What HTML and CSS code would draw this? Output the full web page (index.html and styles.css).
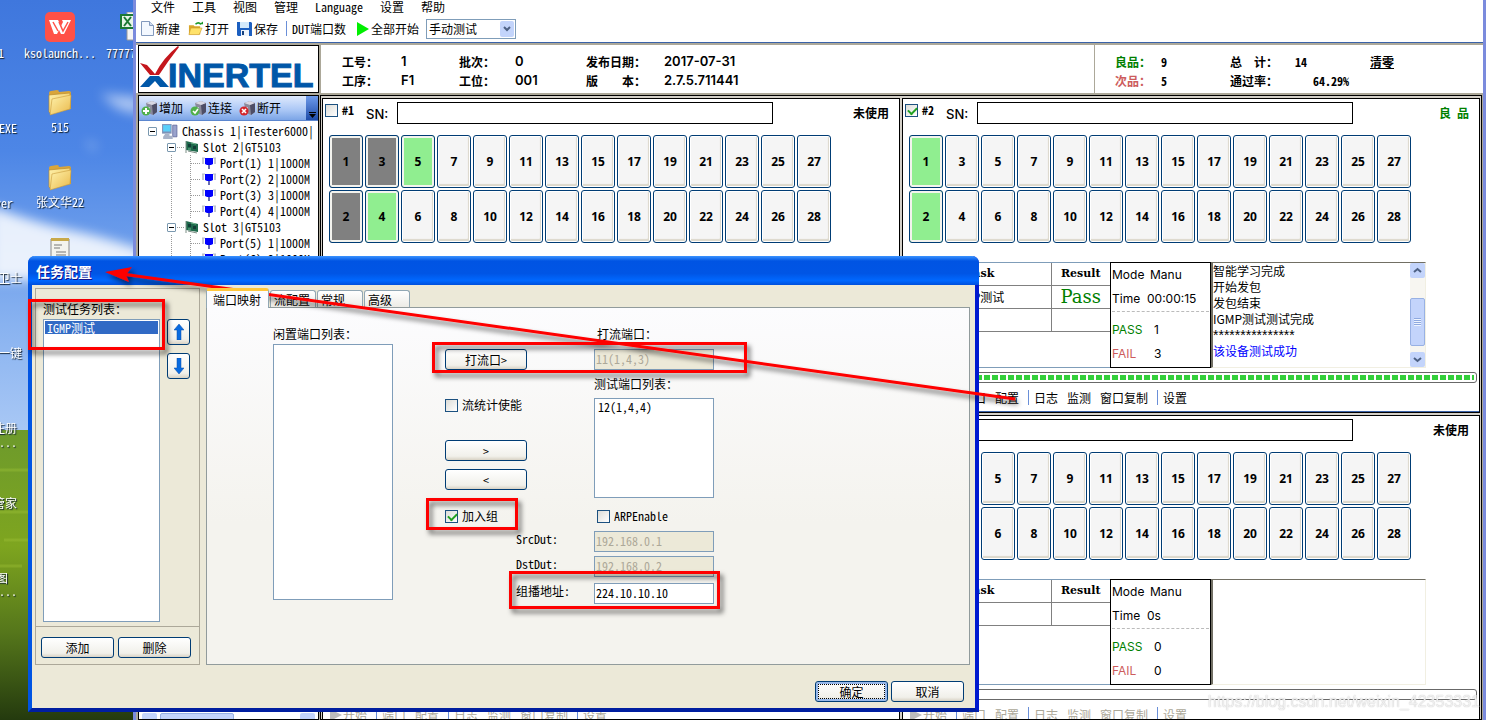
FILE: index.html
```html
<!DOCTYPE html>
<html lang="zh-CN">
<head>
<meta charset="utf-8">
<title>任务配置</title>
<link rel="stylesheet" href="styles.css">
</head>
<body>
<svg class="defs" aria-hidden="true">
  <defs>
    <linearGradient id="gold" x1="0" y1="0" x2="1" y2="1"><stop offset="0" stop-color="#fff3ad"/><stop offset="1" stop-color="#e9b84a"/></linearGradient>
    <symbol id="folder" viewBox="0 0 26 26">
      <path d="M2 3q0-2 2-2l6-1q2 0 2 2l10-1q2 0 2 2v16l-20 4z" fill="#d9a53a"/>
      <path d="M2 5l10-1 11-1v15L4 24 2 22z" fill="url(#gold)" stroke="#b98a2c" stroke-width=".7"/>
      <path d="M5 9l19-4-1 14L3 25z" fill="url(#gold)" stroke="#c99c3c" stroke-width=".6"/>
    </symbol>
    <symbol id="server" viewBox="0 0 16 16">
      <path d="M3 3l6-2 5 2v9l-4 3-5-2z" fill="#8a8a9c"/>
      <path d="M9 5l5-2v9l-4 3z" fill="#4e4e66"/>
      <path d="M3 3l6-2 5 2-5 2z" fill="#d8d8e4"/>
      <path d="M5 7h2v5H5z" fill="#c9c9d8"/>
    </symbol>
    <symbol id="pc" viewBox="0 0 16 16">
      <path d="M1 1h9v9H1z" fill="#7d92b8"/><path d="M2 2h7v6H2z" fill="#5bd0fa"/>
      <path d="M11 2h4v11h-4z" fill="#9aa3cc" stroke="#5a6298" stroke-width=".7"/>
      <path d="M4 10h4v2h3v3H2v-2z" fill="#a9b3c8"/>
    </symbol>
    <symbol id="card" viewBox="0 0 14 14">
      <path d="M1 1l12 3v8L1 10z" fill="#1f6a4c"/><path d="M3 4h3v3H3zM8 6h3v3H8z" fill="#123c36"/>
      <path d="M1 1v12M3 11l9 2" stroke="#7d8f86"/><path d="M6 3l5 1M3 9h3" stroke="#7fc79d" stroke-width=".8"/>
    </symbol>
    <symbol id="port" viewBox="0 0 14 14">
      <path d="M3 2h8v6l-2 1H5L3 8z" fill="#00f"/><path d="M1 2v6M13 2v6" stroke="#8a93a8"/>
      <path d="M0 2h3M11 2h3" stroke="#b7bcc8"/><path d="M6 9h2v4H6z" fill="#6a6fb0"/>
    </symbol>
  </defs>
</svg>

<aside class="desktop">
  <svg class="wallpaper" viewBox="0 0 133 720" preserveAspectRatio="none" aria-hidden="true">
    <defs>
      <linearGradient id="sky" x1="0" y1="0" x2="0" y2="1"><stop offset="0" stop-color="#3f77dd"/><stop offset=".35" stop-color="#4d86e6"/><stop offset=".75" stop-color="#88b2f0"/><stop offset="1" stop-color="#a9c8f5"/></linearGradient>
      <linearGradient id="grass" x1="0" y1="0" x2="0" y2="1"><stop offset="0" stop-color="#6d9a2c"/><stop offset=".4" stop-color="#7ea51f"/><stop offset=".7" stop-color="#55761b"/><stop offset="1" stop-color="#243a0e"/></linearGradient>
      <filter id="haze" x="-30%" y="-60%" width="160%" height="220%"><feGaussianBlur stdDeviation="6"/></filter>
    </defs>
    <rect width="133" height="432" fill="url(#sky)"/>
    <g fill="#fff" filter="url(#haze)">
      <path d="M100 94l40 3v18l-22-6z" opacity=".55"/>
      <path d="M-10 206q50 18 80 24t73 20v30H-10z" opacity=".85"/>
      <path d="M84 140l14 4-5 8z" opacity=".3"/>
    </g>
    <rect y="430" width="133" height="290" fill="url(#grass)"/>
    <g stroke="#a3c63a" opacity=".35"><path d="M0 470h30M0 512h28M4 540h26M0 566h22" stroke-width="3"/></g>
  </svg>
  <span class="lbl l1">1</span>
  <span class="lbl l2">EXE</span>
  <span class="lbl l3">ver</span>
  <span class="lbl l4">卫士 T</span>
  <span class="lbl l5">一键 A</span>
  <span class="lbl l6">注册<br>...</span>
  <span class="lbl l7">管家</span>
  <span class="lbl l8">图</span>
  <span class="lbl l9">n...</span>
  <figure class="shortcut s1">
    <svg width="30" height="30" viewBox="0 0 30 30"><rect width="30" height="30" rx="5" fill="#ff5147"/><path d="M4 8h9l3 6 2-4-1-2h9l-7 14h-3l-2-4-2 4h-3z" fill="#fff"/><path d="M8 10l5 9M14 10l4 9 5-9" stroke="#ff5147" stroke-width="1.5" fill="none"/></svg>
    <figcaption>ksolaunch...</figcaption>
  </figure>
  <figure class="shortcut s2"><svg width="26" height="26"><use href="#folder"/></svg><figcaption>515</figcaption></figure>
  <figure class="shortcut s3"><svg width="26" height="26"><use href="#folder"/></svg><figcaption>张文华22</figcaption></figure>
  <figure class="shortcut s4"><svg width="20" height="24" viewBox="0 0 20 24"><path d="M1 2h18v22H1z" fill="#f4f4ee" stroke="#888"/><path d="M1 1h18v3H1z" fill="#c8a94a"/><path d="M4 8h8M4 11h6M6 15h10M6 18h10" stroke="#777"/></svg></figure>
  <figure class="shortcut s5"><svg width="16" height="30" viewBox="0 0 16 30"><path d="M7 0h9v28H7z" fill="#f5f5f5" stroke="#999"/><path d="M0 2h14v15H0z" fill="#1d7a35"/><path d="M2 4h11v11H2z" fill="#e8f5e8"/><path d="M4 5l7 9M11 5l-7 9" stroke="#1d7a35" stroke-width="2"/></svg><figcaption>77777</figcaption></figure>
</aside>

<main class="app">
  <nav class="menubar">
    <button>文件</button><button>工具</button><button>视图</button><button>管理</button><button>Language</button><button>设置</button><button>帮助</button>
  </nav>
  <div class="toolbar">
    <button class="tool"><svg width="13" height="15" viewBox="0 0 13 15"><path d="M.5.5h8l4 4v10H.5z" fill="#f3f8ff" stroke="#8299bd"/><path d="M8.500.5v4h4" fill="#cfdcf0" stroke="#8299bd"/></svg>新建</button>
    <button class="tool"><svg width="15" height="15" viewBox="0 0 16 15"><path d="M1 4h5l1 1h6v9H1z" fill="#d9a72c"/><path d="M3 7h12l-3 7H1z" fill="#ffe26a" stroke="#c9992a" stroke-width=".6"/><path d="M8 3q3-3 6 0" stroke="#1d9a2a" stroke-width="1.6" fill="none"/><path d="M12 3h4v-3z" fill="#1d9a2a"/></svg>打开</button>
    <button class="tool"><svg width="15" height="15" viewBox="0 0 15 15"><path d="M0 1h14l1 1v13H1l-1-1z" fill="#1c5fc0"/><path d="M3 1h9v6H3z" fill="#d3e9fb"/><path d="M4 9h8v6H4z" fill="#eef4fb"/><path d="M5 10h2v4H5z" fill="#16427f"/></svg>保存</button>
    <i class="sep"></i>
    <button class="tool">DUT端口数</button>
    <button class="tool start"><svg width="12" height="14" viewBox="0 0 12 14"><path d="M0 0l12 7-12 7z" fill="#0e0"/></svg>全部开始</button>
    <span class="combo"><select aria-label="测试模式"><option>手动测试</option></select><svg width="14" height="16" viewBox="0 0 14 16"><rect width="14" height="16" rx="2" fill="#c3d4fb"/><path d="M4 6l3 3 3-3" stroke="#4d6185" stroke-width="2" fill="none"/></svg></span>
  </div>
  <header class="summary">
    <div class="logo">
      <svg width="179" height="47" viewBox="0 0 179 47" role="img" aria-label="XINERTEL">
        <path d="M1 17l7 2 8 9q8-16 23-28l1 1Q29 15 20 29h-9z" fill="#c4161c"/>
        <path d="M11 30h9l10 11h-9l-5-6-6 6H1z" fill="#0057a8"/>
        <text x="29" y="41" class="logo-text">INERTEL</text>
      </svg>
    </div>
    <dl class="info">
      <dt>工号：</dt><dd>1</dd><dt>批次：</dt><dd>0</dd><dt>发布日期：</dt><dd>2017-07-31</dd>
      <dt>工序：</dt><dd>F1</dd><dt>工位：</dt><dd>001</dd><dt>版&emsp;&emsp;本：</dt><dd>2.7.5.711441</dd>
    </dl>
    <div class="stats">
      <span class="good">良品：</span><span>9</span><span>总&emsp;计：</span><span>14</span><a href="#">清零</a>
      <span class="bad">次品：</span><span>5</span><span>通过率：</span><span class="rate">64.29%</span>
    </div>
  </header>
  <div class="work">
    <section class="sidebar">
      <div class="side-tools">
        <button><svg width="18" height="16"><use href="#server" x="2" width="16" height="16"/><circle cx="5" cy="11" r="4.500" fill="#4fb04a"/><path d="M5 8v6M2 11h6" stroke="#fff" stroke-width="2"/></svg>增加</button>
        <button><svg width="18" height="16"><use href="#server" x="2" width="16" height="16"/><circle cx="5" cy="11" r="4.500" fill="#4fb04a"/><path d="M3 11l2 2 3-4" stroke="#fff" stroke-width="1.600" fill="none"/></svg>连接</button>
        <button><svg width="18" height="16"><use href="#server" x="2" width="16" height="16"/><circle cx="5" cy="11" r="4.500" fill="#d3262c"/><path d="M3 9l4 4M7 9l-4 4" stroke="#fff" stroke-width="1.600"/></svg>断开</button>
        <i class="grip"><svg width="7" height="6" viewBox="0 0 7 6"><path d="M0 0h7v1H0zM0 2h7L3.500 6z" fill="#000"/></svg></i>
      </div>
      <ul class="tree" id="tree"></ul>
      <div class="hscroll"><button aria-label="左">‹</button><i></i><button aria-label="右">›</button></div>
    </section>
    <section class="panels" id="panels"></section>
  </div>
</main>

<section class="dialog" role="dialog" aria-labelledby="dlg-title">
  <h1 id="dlg-title">任务配置</h1>
  <div class="client">
    <div class="columns">
      <div class="tasks">
        <div class="tasks-top">
          <div class="tasks-list">
            <label for="tasklist">测试任务列表：</label>
            <div class="listbox" id="tasklist" role="listbox" tabindex="0"><div class="selected" role="option" aria-selected="true">IGMP测试</div></div>
          </div>
          <div class="movers">
            <button class="btn" aria-label="上移"><svg width="10" height="16" viewBox="0 0 10 16"><path d="M5 0l5 6H7v10H3V6H0z" fill="#0a6be0" stroke="#0a4ca8" stroke-width=".5"/></svg></button>
            <button class="btn" aria-label="下移"><svg width="10" height="16" viewBox="0 0 10 16"><path d="M5 16l5-6H7V0H3v10H0z" fill="#0a6be0" stroke="#0a4ca8" stroke-width=".5"/></svg></button>
          </div>
        </div>
        <div class="tasks-foot"><button class="btn">添加</button><button class="btn">删除</button></div>
      </div>
      <div class="tabs">
        <div class="tab-row" role="tablist">
          <button class="tab active" role="tab">端口映射</button><button class="tab" role="tab">流配置</button><button class="tab" role="tab">常规</button><button class="tab" role="tab">高级</button>
        </div>
        <div class="page">
          <div class="idle"><label for="idle">闲置端口列表：</label><div class="listbox" id="idle" role="listbox" tabindex="0"></div></div>
          <div class="mapping">
            <label class="c3 inset" for="flow">打流端口：</label>
            <button class="btn c1">打流口&gt;</button><input class="c3" id="flow" value="11(1,4,3)" disabled>
            <label class="c3" for="ports">测试端口列表：</label>
            <div class="moves c1">
              <label class="check"><input type="checkbox">流统计使能</label>
              <button class="btn">&gt;</button>
              <button class="btn">&lt;</button>
            </div>
            <div class="listbox c3" id="ports" role="listbox" tabindex="0"><div role="option">12(1,4,4)</div></div>
            <label class="check c1"><input type="checkbox" checked>加入组</label><label class="check c3 inset"><input type="checkbox">ARPEnable</label>
            <label class="c2" for="src">SrcDut:</label><input class="c3" id="src" value="192.168.0.1" disabled>
            <label class="c2" for="dst">DstDut:</label><input class="c3" id="dst" value="192.168.0.2" disabled>
            <label class="c2" for="grp">组播地址:</label><input class="c3" id="grp" value="224.10.10.10">
          </div>
        </div>
      </div>
    </div>
    <div class="dialog-foot"><button class="btn default">确定</button><button class="btn">取消</button></div>
  </div>
</section>

<svg class="marks" width="1486" height="720" viewBox="0 0 1486 720" aria-hidden="true">
  <defs><filter id="drop" x="-5%" y="-20%" width="115%" height="150%"><feDropShadow dx="3" dy="4" stdDeviation="2.500" flood-color="#000" flood-opacity=".6"/></filter></defs>
  <g filter="url(#drop)" fill="none" stroke="#fe0000" stroke-width="3">
    <rect x="29.500" y="300.500" width="134" height="48"/>
    <rect x="433.500" y="343.500" width="312" height="28"/>
    <rect x="427.500" y="499.500" width="89" height="29"/>
    <rect x="510.500" y="572.500" width="208" height="35"/>
    <path d="M1015 399L122 274"/>
    <path d="M105 272l27-5-6 8 3 7z" fill="#fe0000" stroke="none"/>
  </g>
</svg>
<div class="watermark">https://blog.csdn.net/weixin_42353331</div>
<script src="app.js"></script>
</body>
</html>
```
FILE: styles.css
```css
* { box-sizing: border-box; }
html, body { height: 100%; }
body {
  margin: 0; display: flex; position: relative; overflow: hidden;
  font: 12px/16px "Noto Sans Mono CJK SC", "Noto Sans CJK SC", sans-serif; color: #000;
}
button, input, select { font: inherit; color: inherit; margin: 0; padding: 0; border: 0; background: none; border-radius: 0; }
button { white-space: nowrap; }
svg { display: block; flex: none; }
figure, dl, dd, ul, h1 { margin: 0; padding: 0; }
.defs { position: absolute; width: 0; height: 0; }

/* Desktop */
.desktop { position: relative; flex: none; width: 133px; overflow: hidden; color: #fff; text-shadow: 1px 1px 1px #123; }
.wallpaper { position: absolute; inset: 0; width: 100%; height: 100%; }
.lbl, .shortcut { position: absolute; white-space: nowrap; line-height: 14px; }
.lbl { right: 116px; text-align: right; }
.l1 { top: 46px; right: 129px; }
.l2 { top: 121px; }
.l3 { top: 196px; right: 120px; }
.l4 { top: 271px; right: 99px; }
.l5 { top: 346px; right: 99px; }
.l6 { top: 421px; }
.l7 { top: 496px; }
.l8 { top: 571px; right: 125px; }
.l9 { top: 584px; }
.shortcut { display: flex; flex-direction: column; align-items: center; gap: 4px; width: 80px; left: 20px; }
.s1 { top: 12px; }
.s2 { top: 90px; }
.s3 { top: 165px; }
.s4 { top: 237px; }
.s5 { top: 12px; left: 106px; align-items: flex-start; }
.s5 svg { margin-left: 14px; }

/* Application window */
.app { flex: 1; min-width: 0; display: flex; flex-direction: column; background: #fff; border: solid #7b8bdd; border-width: 0 3px; }
.menubar { display: flex; gap: 17px; height: 15px; padding-left: 15px; }
.menubar button { line-height: 14px; height: 14px; }
.toolbar { display: flex; align-items: center; height: 28px; padding-left: 5px; border-bottom: 1px solid #3a62a8; }
.tool { display: flex; align-items: center; gap: 2px; margin-right: 8px; }
.toolbar .sep { margin-right: 5px; }
.sep { width: 1px; height: 15px; background: #6a8fd8; }
.start { margin: 0 7px 0 3px; }
.combo { position: relative; display: block; width: 90px; }
.combo select { appearance: none; width: 100%; height: 20px; border: 1px solid #7f9db9; padding: 0 2px; background: #fff; line-height: 16px; }
.combo svg { position: absolute; right: 2px; top: 2px; pointer-events: none; }
.summary { display: flex; height: 52px; border: solid #aca899; border-width: 2px 0; padding-left: 2px; }
.logo { width: 181px; border: 1px solid #000; overflow: hidden; }
.logo-text { font: bold 34px "Liberation Sans", Arial, sans-serif; fill: #0057a8; stroke: #0057a8; stroke-width: 1; }
.info, .stats { display: grid; align-content: center; line-height: 19px; padding-top: 4px; font-weight: bold; white-space: nowrap; }
.info { flex: 1; grid-template-columns: 59px 58px 56px 71px 78px 1fr; padding-left: 21px; border-left: 2px solid #aca899; }
.info dd { font: 600 13px/19px Inter, "Liberation Sans", sans-serif; }
.stats { width: 389px; border-left: 1px solid #aca899; padding-left: 20px; grid-template-columns: 46px 69px 65px 75px 1fr; }
.stats a { color: #000; }
.good { color: #008000; }
.bad { color: #cd5c5c; }
.rate { padding-left: 18px; }
.work { flex: 1; min-height: 0; display: flex; gap: 1px; padding: 0 1px 0 2px; background: #aca899; }

/* Chassis tree */
.sidebar { flex: none; width: 181px; display: flex; flex-direction: column; border: 1px solid #000; background: #fff; overflow: hidden; }
.side-tools { display: flex; align-items: center; height: 25px; padding-left: 2px; gap: 7px; background: linear-gradient(#dfeafd, #a9c6f5 60%, #7ba4e6); border-bottom: 1px solid #5b86cf; }
.side-tools button { display: flex; align-items: center; }
.grip { align-self: stretch; display: flex; align-items: flex-end; margin-left: auto; width: 12px; padding: 0 0 2px 3px; background: linear-gradient(#6f9bea, #1d4ba8); }
.tree { flex: 1; min-height: 0; overflow: hidden; list-style: none; padding: 2px 0 0 9px; }
.tree li { display: flex; align-items: center; height: 16px; gap: 4px; white-space: nowrap; }
.tree .slot { padding-left: 19px; }
.tree .port {
  gap: 2px; padding-left: 43px;
  background:
    repeating-linear-gradient(#999 0 1px, #fff 1px 2px) 23px 0 / 1px 100% no-repeat,
    repeating-linear-gradient(#999 0 1px, #fff 1px 2px) 42px 0 / 1px 100% no-repeat;
}
.tree .port span { padding-left: 2px; }
.tree .lead { width: 9px; border-top: 1px dotted #999; }
.tree .slot .lead { width: 7px; margin: 0 -3px; }
.box { flex: none; width: 9px; height: 9px; border: 1px solid #7a98af; border-radius: 1px; background: linear-gradient(#000, #000) center / 5px 1px no-repeat #fff; }
.hscroll { display: flex; gap: 3px; height: 24px; flex: none; padding: 0 3px; margin-bottom: -18px; }
.hscroll button { width: 15px; height: 17px; border-radius: 2px; background: #c3d4fb; color: #4d6185; line-height: 12px; }
.hscroll i { width: 74px; height: 17px; background: #c3d4fb; border: 1px solid #98b1e4; border-radius: 2px; }
.hscroll button:last-child { margin-left: auto; }

/* Test panels */
.panels { flex: 1; min-width: 0; display: grid; grid-template-columns: 1fr 1fr; align-content: start; gap: 2px; border: 1px solid #000; padding: 2px 1px; background: #d4d0c8; overflow: hidden; }
.panel { min-width: 0; border: 1px solid #000; background: #fff; }
.head { display: flex; height: 36px; padding: 3px 10px 0 2px; font-weight: bold; }
.head label { display: flex; gap: 4px; width: 41px; height: 16px; align-items: center; line-height: 14px; }
.head .sn { font: 500 13px/24px Inter, sans-serif; width: 31px; height: 24px; }
.head .serial { width: 376px; height: 22px; border: 1px solid #000; background: #fff; }
.head output { margin-left: auto; line-height: 22px; }
input[type=checkbox] { appearance: none; flex: none; width: 13px; height: 13px; border: 1px solid #1c5180; background: linear-gradient(135deg, #dcdcd7, #fff); }
input[type=checkbox]:checked::before { content: ""; display: block; width: 7px; height: 4px; margin: 2px; border: solid #21a121; border-width: 0 0 2px 2px; transform: rotate(-45deg); }
.ports { display: grid; grid-template-columns: repeat(14, 34px); grid-template-rows: 53px 53px; grid-auto-flow: column; gap: 2px; padding-left: 6px; }
.ports button { border: 1px solid #003c74; border-radius: 3px; background: #f5f5f5; box-shadow: inset 0 0 0 1px #fff, inset -1px -2px 1px 1px #dcd8cb; font: bold 12px/16px "Noto Sans", sans-serif; }
.ports .on { background: #90ee90; box-shadow: inset 0 0 0 2px #f3f3ee; }
.ports .off { background: #808080; box-shadow: inset 0 0 0 2px #f3f3ee; }
.detail { display: flex; height: 106px; margin: 19px 0 4px 6px; }
.results { width: 201px; border: 1px solid #7f9db9; border-right: 0; }
.results table { width: 100%; border-collapse: collapse; table-layout: fixed; text-align: center; }
.results th, .results td { height: 23px; padding: 0; border-bottom: 1px solid #808080; }
.results th { height: 22px; font: bold 11px/16px "DejaVu Serif", serif; }
.results th:last-child, .results td:last-child { width: 59px; border-left: 1px solid #808080; }
.results .pass { font: 18px/20px "DejaVu Serif", serif; color: #008000; }
.mode { width: 101px; border: 1px solid #000; padding: 0 1px; font: 12px/24px Inter, "Liberation Sans", sans-serif; white-space: pre; }
.mode div { display: grid; grid-template-columns: 35px 1fr; }
.mode .manu { grid-template-columns: 38px 1fr; }
.mode .score { grid-template-columns: 42px 1fr; }
.mode .manu + div { border-bottom: 1px dashed #bbb; margin-bottom: 6px; }
.log { display: flex; width: 215px; border: 1px solid #f1efe2; border-top: 1px solid #716f64; border-left: 2px solid #716f64; }
.log-text { flex: 1; font-family: "Noto Sans CJK SC", sans-serif; line-height: 16px; }
.log-text p { margin: 0; }
.log-text .stars { font: 14px/16px "Liberation Sans", sans-serif; }
.log-text .done { color: #00f; }
.vscroll { display: flex; flex-direction: column; width: 15px; background: #f7f6f1; }
.vscroll button { height: 15px; border-radius: 2px; background: #c3d4fb; display: grid; place-items: center; }
.vscroll i { height: 48px; margin: auto 0 6px; border: 1px solid #98b1e4; border-radius: 2px; background: repeating-linear-gradient(#8ea9e0 0 1px, #eef4fe 1px 2px) center / 7px 8px no-repeat #c3d4fb; }
.bar { height: 11px; margin: 0 2px 0 6px; border: 1px solid #686868; border-radius: 3px; padding: 2px; }
.bar i { display: block; height: 100%; background: repeating-linear-gradient(90deg, #33cf3a 0 6px, #fff 6px 8px); }
.actions { display: flex; align-items: center; height: 29px; padding: 1px 0 0 7px; border-bottom: 1px solid #3a62a8; gap: 9px; }
.actions .sep { margin: 0 -4px 0 0; }
.actions button { display: flex; align-items: center; }
.actions button:disabled { color: #aca899; }

/* Task dialog */
.dialog { position: absolute; left: 28px; top: 256px; width: 951px; border: 4px solid #0831d9; border-color: #0054e3 #0019cf #001ea0 #0054e3; border-top: 0; border-radius: 7px 7px 0 0; background: #ece9d8; }
.dialog h1 { height: 29px; margin: 0 -4px; padding-left: 8px; border-radius: 7px 7px 0 0; background: linear-gradient(#3a93ff, #0054e3 5px, #0055e5 60%, #0068ff 85%, #0050dc); color: #fff; font: bold 14px/30px "Noto Sans CJK SC", sans-serif; text-shadow: 1px 1px #0f1089; }
.client { padding: 3px 5px 6px 3px; }
.columns { display: flex; gap: 6px; }
.tasks { width: 165px; border: 1px solid #aca899; }
.tasks-top { display: flex; gap: 7px; padding: 12px 0 4px 7px; border-bottom: 1px solid #aca899; }
.tasks-list { width: 117px; }
.tasks-list label { display: block; height: 18px; line-height: 16px; }
.listbox { border: 1px solid #7f9db9; background: #fff; padding: 1px; line-height: 14px; }
.tasks-list .listbox { height: 303px; }
.selected { background: #316ac5; color: #fff; line-height: 13px; height: 13px; padding-left: 2px; }
.movers { display: flex; flex-direction: column; gap: 8px; padding-top: 18px; }
.movers .btn { width: 23px; height: 26px; display: grid; place-items: center; }
.tasks-foot { display: flex; gap: 4px; padding: 10px 0 6px 5px; }
.btn { width: 73px; height: 21px; border: 1px solid #003c74; border-radius: 3px; background: linear-gradient(#fff, #f1f0ea 80%, #d8d2c4); line-height: 18px; }
.default { box-shadow: inset 0 0 0 2px #98b8ea; outline: 1px dotted #000; outline-offset: -4px; }
.tabs { flex: 1; min-width: 0; display: flex; flex-direction: column; }
.tab-row { display: flex; align-items: flex-end; gap: 1px; height: 19px; }
.tab { position: relative; height: 17px; width: 46px; border: 1px solid #91a7b4; border-bottom: 0; border-radius: 3px 3px 0 0; background: linear-gradient(#fff, #ecebe6); line-height: 17px; text-align: left; padding-left: 3px; }
.tab.active { width: 63px; height: 20px; margin-bottom: -1px; z-index: 1; padding-left: 6px; border-top: 3px solid #ffc73c; line-height: 14px; background: #fcfcfe; }
.page { flex: 1; display: flex; gap: 52px; padding: 18px 0 0 66px; border: 1px solid #919b9c; background: linear-gradient(#fcfcfe, #f4f3ee 60%); }
.idle { width: 120px; }
.idle label { display: block; height: 18px; line-height: 15px; }
.idle .listbox { height: 256px; }
.mapping { display: grid; grid-template-columns: 71px 78px 120px; grid-template-rows: 23px 27px 22px 111px 22px 25px 27px 21px; align-items: start; }
.c1 { grid-column: 1 / 3; }
.c2 { grid-column: 2; }
.c3 { grid-column: 3; }
.inset { padding-left: 3px; }
.mapping .btn { width: 82px; }
.mapping input:not([type]) { width: 100%; height: 21px; border: 1px solid #7f9db9; background: #fff; padding: 0 1px 2px; }
.mapping input:disabled { background: #ece9d8 !important; color: #aca899; }
.mapping .listbox { height: 100px; padding-left: 3px; }
.check { display: flex; align-items: center; gap: 4px; line-height: 14px; }
.moves { display: flex; flex-direction: column; }
.moves .check { margin-bottom: 28px; }
.moves .btn + .btn { margin-top: 8px; }
.dialog-foot { display: flex; justify-content: flex-end; gap: 3px; padding: 16px 6px 0 0; }

.marks { position: absolute; left: 0; top: 0; pointer-events: none; }
.watermark { position: absolute; right: 6px; top: 692px; font: 16px/20px "Liberation Sans", Arial, sans-serif; color: rgba(255, 255, 255, .8); text-shadow: 0 0 1px #aaa; pointer-events: none; }
```
FILE: app.js
```js
const icon = (id, size) => `<svg width="${size}" height="${size}"><use href="#${id}"/></svg>`;

const slots = [
  { name: "Slot 2|GT5103", ports: ["Port(1) 1|1000M", "Port(2) 2|1000M", "Port(3) 3|1000M", "Port(4) 4|1000M"] },
  { name: "Slot 3|GT5103", ports: ["Port(5) 1|1000M", "Port(6) 2|1000M"] },
];
document.getElementById("tree").innerHTML =
  `<li class="root"><i class="box"></i>${icon("pc", 17)}Chassis 1|iTester6000|</li>` +
  slots.map(s =>
    `<li class="slot"><i class="box"></i><i class="lead"></i>${icon("card", 14)}${s.name}</li>` +
    s.ports.map(p => `<li class="port"><i class="lead"></i>${icon("port", 14)}<span>${p}</span></li>`).join("")
  ).join("");

const idle = { status: "未使用", time: "0s", pass: 0, fail: 0, tasks: [["", ""]], log: [] };
const panels = [
  { ...idle, id: 1, ports: { 1: "off", 2: "off", 3: "off", 4: "on", 5: "on" } },
  {
    id: 2, checked: true, status: "良 品", cls: "good", ports: { 1: "on", 2: "on" },
    time: "00:00:15", pass: 1, fail: 3, tasks: [["IGMP测试", "Pass"], ["", ""]], running: true,
    log: ["智能学习完成", "开始发包", "发包结束", "IGMP测试测试完成", "***************", "该设备测试成功"],
  },
  { ...idle, id: 3, ports: {} },
  { ...idle, id: 4, ports: {} },
];

const arrow = d => `<svg width="9" height="7" viewBox="0 0 9 7"><path d="${d}" stroke="#4d6185" stroke-width="2" fill="none"/></svg>`;

function panelHtml(p) {
  const dis = p.running ? "" : "disabled";
  const ports = Array.from({ length: 28 }, (_, i) => i + 1)
    .map(n => `<button class="${p.ports[n] || ""}">${n}</button>`).join("");
  const rows = p.tasks.map(([t, r]) => `<tr><td>${t}</td><td class="pass">${r}</td></tr>`).join("");
  const log = p.log.map((l, i) => `<p class="${i === 5 ? "done" : l[0] === "*" ? "stars" : ""}">${l}</p>`).join("");
  const scroll = p.log.length
    ? `<div class="vscroll"><button aria-label="上">${arrow("M1 5l3.500-3 3.500 3")}</button><i></i><button aria-label="下">${arrow("M1 2l3.500 3 3.500-3")}</button></div>` : "";
  return `<article class="panel">
    <div class="head">
      <label><input type="checkbox" ${p.checked ? "checked" : ""}>#${p.id}</label>
      <label class="sn" for="sn${p.id}">SN:</label><input class="serial" id="sn${p.id}">
      <output class="${p.cls || ""}">${p.status}</output>
    </div>
    <div class="ports">${ports}</div>
    <div class="detail">
      <div class="results"><table><tr><th>Task</th><th>Result</th></tr>${rows}</table></div>
      <div class="mode"><div class="manu"><span>Mode</span><span>Manu</span></div><div><span>Time</span><span>${p.time}</span></div><div class="score"><span class="good">PASS</span><span>${p.pass}</span></div><div class="score"><span class="bad">FAIL</span><span>${p.fail}</span></div></div>
      <div class="log"><div class="log-text">${log}</div>${scroll}</div>
    </div>
    <div class="bar">${p.running ? "<i></i>" : ""}</div>
    <div class="actions">
      <button ${dis}><svg width="13" height="12" viewBox="0 0 13 12"><path d="M0 0l12 6-12 6z" fill="#bbb"/></svg>开始</button><i class="sep"></i>
      <button ${dis}>端口</button><button ${dis}>配置</button><i class="sep"></i>
      <button ${dis}>日志</button><button ${dis}>监测</button><button ${dis}>窗口复制</button><i class="sep"></i>
      <button ${dis}>设置</button>
    </div>
  </article>`;
}
document.getElementById("panels").innerHTML = panels.map(panelHtml).join("");
```
